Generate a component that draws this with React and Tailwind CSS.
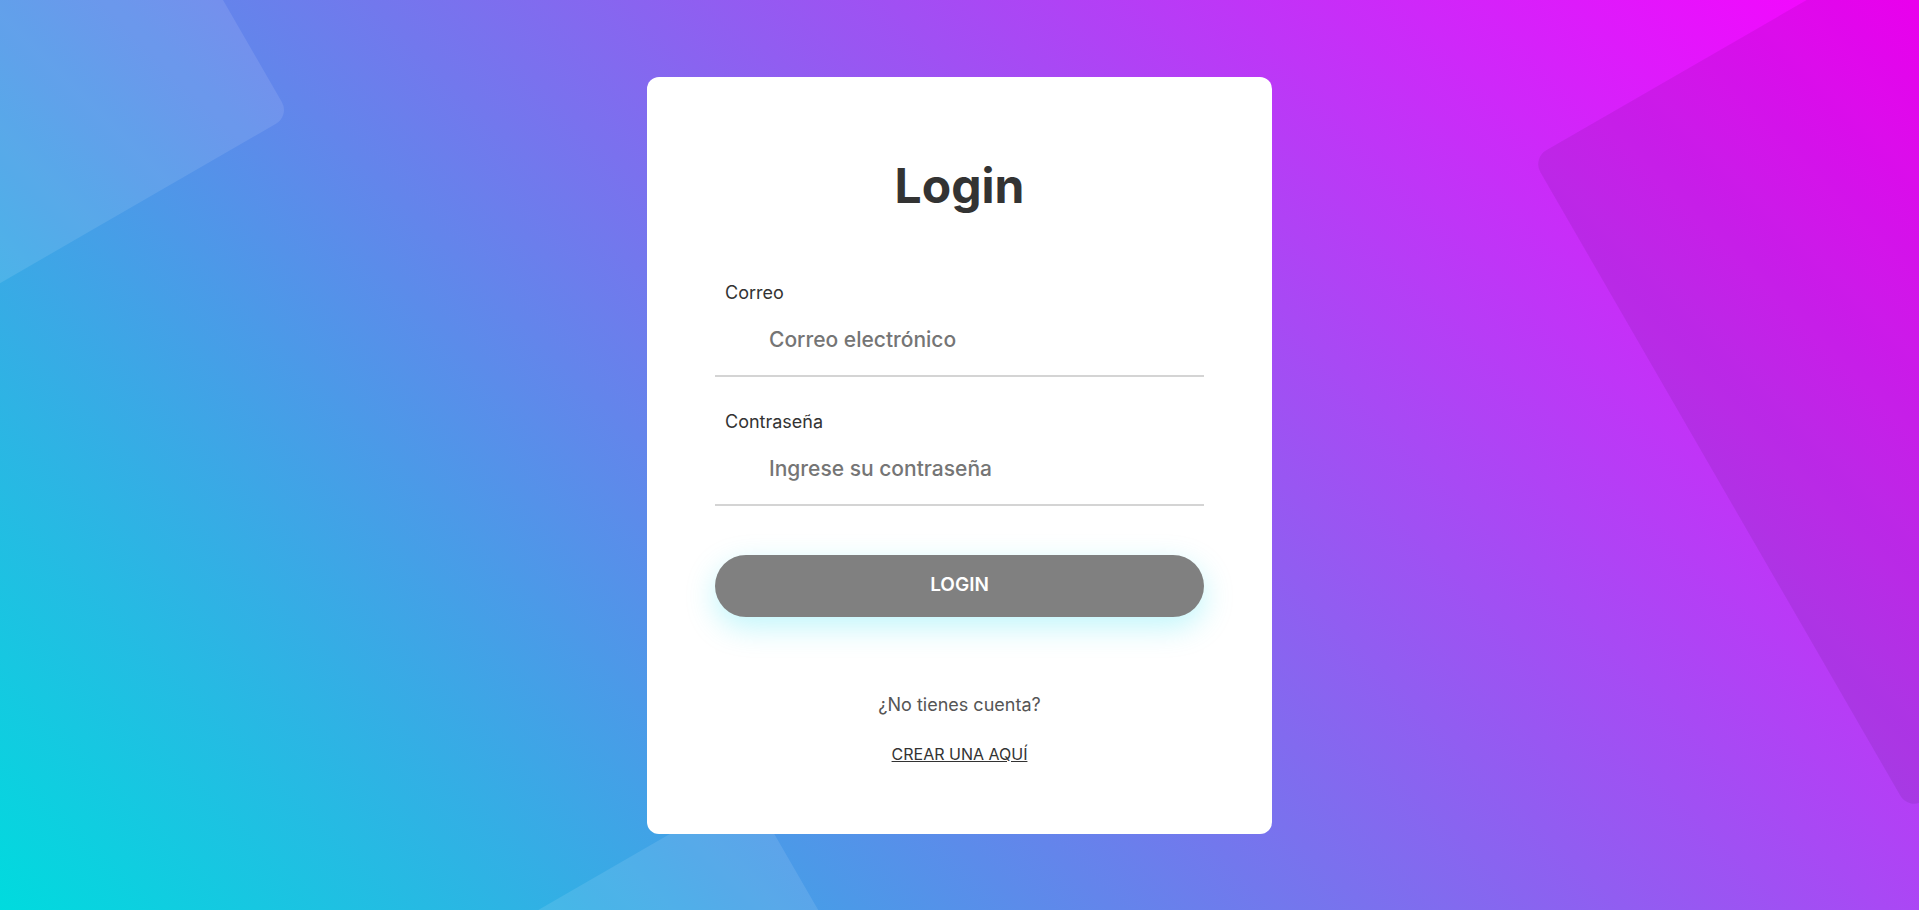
import React, { useState } from "react";

function Field({ label, type, placeholder, value, onChange }) {
  return (
    <div className="flex flex-col">
      <label className="pl-[10px] text-[18px] leading-[24px] text-[#333333]">{label}</label>
      <input
        type={type}
        value={value}
        onChange={(e) => onChange(e.target.value)}
        placeholder={placeholder}
        className="h-[72px] w-full border-b-2 border-[#d4d4d4] bg-transparent pl-[54px] pr-4 text-[21px] font-medium text-[#333333] outline-none placeholder:text-[#757575]"
      />
    </div>
  );
}

export default function App() {
  const [email, setEmail] = useState("");
  const [password, setPassword] = useState("");

  return (
    <div
      className="relative flex h-screen w-full items-center justify-center overflow-hidden bg-[linear-gradient(45deg,#00dbde,#fc00ff)]"
      style={{ fontFamily: "Inter, 'Noto Sans', sans-serif" }}
    >
      {/* background shapes */}
      <div className="absolute left-[-420px] top-[-294px] h-[600px] w-[600px] -rotate-30 rounded-2xl bg-white/10" />
      <div className="absolute left-[475px] top-[862px] h-[400px] w-[400px] -rotate-30 rounded-2xl bg-white/10" />
      <div className="absolute left-[1670px] top-[-80px] h-[752px] w-[752px] -rotate-30 rounded-2xl bg-black/[0.07]" />

      <div className="relative z-10 w-[625px] rounded-xl bg-white px-[68px] pb-[68px] pt-[85px]">
        <h1 className="text-center text-[48px] font-bold leading-[48px] text-[#333333]">Login</h1>

        <form className="mt-[71px] flex flex-col gap-[33px]" onSubmit={(e) => e.preventDefault()}>
          <Field
            label="Correo"
            type="email"
            placeholder="Correo electrónico"
            value={email}
            onChange={setEmail}
          />
          <Field
            label="Contraseña"
            type="password"
            placeholder="Ingrese su contraseña"
            value={password}
            onChange={setPassword}
          />
        </form>

        <button
          type="button"
          className="mt-[49px] h-[62px] w-full rounded-full bg-[#808080] text-[19px] font-semibold text-white shadow-[0_10px_30px_rgba(0,220,240,0.25)]"
        >
          LOGIN
        </button>

        <div className="mt-[76px] flex flex-col items-center gap-[25px]">
          <p className="text-[18px] leading-[24px] text-[#555555]">¿No tienes cuenta?</p>
          <a href="#" className="text-[16px] leading-[24px] text-[#333333] underline">
            CREAR UNA AQUÍ
          </a>
        </div>
      </div>
    </div>
  );
}
